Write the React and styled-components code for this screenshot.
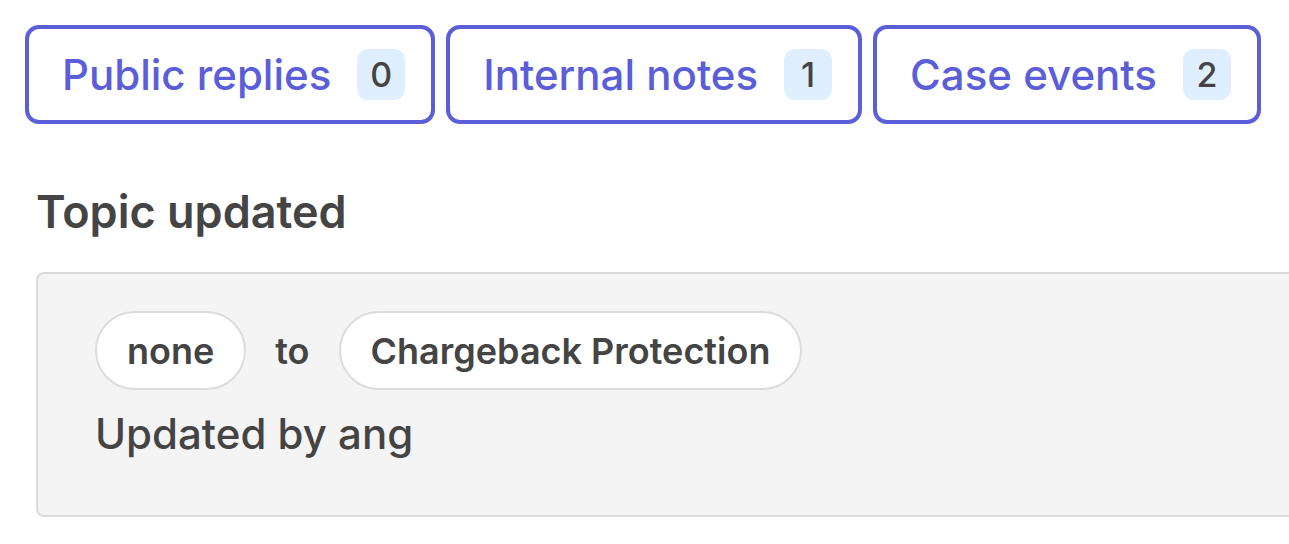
import * as React from "react"
import styled, { createGlobalStyle } from 'styled-components'

const GlobalStyle = createGlobalStyle`
  body {
    margin: 0;
    background: #fff;
    font-family: Inter, "Noto Sans", sans-serif;
    overflow: hidden;
  }
`

const tabs = [
  { label: 'Public replies', count: 0 },
  { label: 'Internal notes', count: 1 },
  { label: 'Case events', count: 2 },
]

const App = () => {
  return (
    <Page>
      <GlobalStyle />
      <TabRow>
        {tabs.map(t => (
          <Tab key={t.label}>
            {t.label}
            <Count>{t.count}</Count>
          </Tab>
        ))}
      </TabRow>
      <Event>
        <EventTitle>Topic updated</EventTitle>
        <Card>
          <ChangeRow>
            <Pill>none</Pill>
            <To>to</To>
            <Pill>Chargeback Protection</Pill>
          </ChangeRow>
          <Author>Updated by ang</Author>
        </Card>
      </Event>
    </Page>
  )
}

export default App

const Page = styled.div`
  padding: 25px 0 0 25px;
  width: 1400px;
`
const TabRow = styled.div`
  display: flex;
  gap: 11px;
`
const Tab = styled.button`
  display: flex;
  align-items: center;
  gap: 26px;
  box-sizing: border-box;
  height: 99px;
  padding: 0 26px 0 33px;
  border: 4px solid #5a5ed8;
  border-radius: 14px;
  background: #fff;
  color: #5a5ed8;
  font-family: inherit;
  font-size: 42px;
  font-weight: 500;
  cursor: pointer;
`
const Count = styled.span`
  display: flex;
  align-items: center;
  justify-content: center;
  width: 48px;
  height: 51px;
  border-radius: 11px;
  background: #e0efff;
  color: #444;
  font-size: 34px;
  font-weight: 500;
`
const Event = styled.div`
  padding: 61px 0 0 11px;
`
const EventTitle = styled.h3`
  margin: 0 0 33px;
  color: #444;
  font-size: 45px;
  font-weight: 600;
  line-height: 54px;
`
const Card = styled.div`
  box-sizing: border-box;
  height: 245px;
  padding: 37px 57px;
  border: 2px solid #dadada;
  border-radius: 8px;
  background: #f4f4f4;
`
const ChangeRow = styled.div`
  display: flex;
  align-items: center;
  gap: 29px;
`
const Pill = styled.span`
  display: flex;
  align-items: center;
  box-sizing: border-box;
  height: 79px;
  padding: 0 30px;
  border: 2px solid #dcdcdc;
  border-radius: 40px;
  background: #fff;
  color: #444;
  font-size: 36px;
  font-weight: 600;
`
const To = styled.span`
  color: #444;
  font-size: 36px;
  font-weight: 600;
`
const Author = styled.div`
  margin-top: 19px;
  color: #444;
  font-size: 42px;
  font-weight: 500;
  line-height: 50px;
`
